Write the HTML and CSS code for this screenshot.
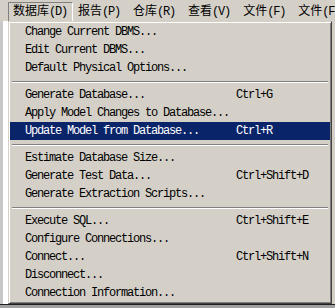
FILE: index.html
```html
<!DOCTYPE html>
<html>
<head>
  <title>Database Menu</title>
  <meta name="viewport" content="width=device-width, initial-scale=1">
  <link rel="stylesheet" href="styles.css">
</head>
<body>
  <div class="menubar">
    <span class="menu-title active">数据库<span class="key">(D)</span></span>
    <span class="menu-title">报告<span class="key">(P)</span></span>
    <span class="menu-title">仓库<span class="key">(R)</span></span>
    <span class="menu-title">查看<span class="key">(V)</span></span>
    <span class="menu-title">文件<span class="key">(F)</span></span>
    <span class="menu-title">文件<span class="key">(F)</span></span>
  </div>
  <div class="stage">
    <div class="backdrop"></div>
    <div class="dropdown">
      <div class="item"><span class="label">Change Current DBMS...</span></div>
      <div class="item"><span class="label">Edit Current DBMS...</span></div>
      <div class="item"><span class="label">Default Physical Options...</span></div>
      <div class="sep"></div>
      <div class="item"><span class="label">Generate Database...</span><span class="shortcut">Ctrl+G</span></div>
      <div class="item"><span class="label">Apply Model Changes to Database...</span></div>
      <div class="item selected"><span class="label">Update Model from Database...</span><span class="shortcut">Ctrl+R</span></div>
      <div class="sep"></div>
      <div class="item"><span class="label">Estimate Database Size...</span></div>
      <div class="item"><span class="label">Generate Test Data...</span><span class="shortcut">Ctrl+Shift+D</span></div>
      <div class="item"><span class="label">Generate Extraction Scripts...</span></div>
      <div class="sep"></div>
      <div class="item"><span class="label">Execute SQL...</span><span class="shortcut">Ctrl+Shift+E</span></div>
      <div class="item"><span class="label">Configure Connections...</span></div>
      <div class="item"><span class="label">Connect...</span><span class="shortcut">Ctrl+Shift+N</span></div>
      <div class="item"><span class="label">Disconnect...</span></div>
      <div class="item"><span class="label">Connection Information...</span></div>
    </div>
    <div class="rest"></div>
  </div>
  <div class="bottom"></div>
</body>
</html>
```

FILE: styles.css
```css
body {
  margin: 0;
  width: 335px;
  height: 308px;
  overflow: hidden;
  background-color: #d4d0c8;
  font-family: "Liberation Mono", "Noto Sans CJK SC", monospace;
  color: #000;
}
.menubar {
  display: flex;
  height: 21px;
  padding-left: 8px;
  background-color: #d4d0c8;
  font-size: 12px;
  line-height: 17px;
}
.menu-title {
  padding: 1px 5px 0 4px;
  margin-right: 2px;
  margin-top: 2px;
  height: 17px;
  white-space: nowrap;
  border: 1px solid transparent;
}
.menu-title.active {
  border-color: #808080 #fff #fff #808080;
  margin-right: 0;
}
.key {
  letter-spacing: -1.2px;
  font-size: 12px;
}
.stage {
  display: flex;
}
.backdrop {
  width: 5px;
  border-left: 3px solid #c8c8c8;
  background-color: #fff;
}
.dropdown {
  width: 320px;
  padding: 1px;
  border-style: solid;
  border-width: 1px;
  border-color: #d4d0c8 #404040 #404040 #d4d0c8;
  box-shadow: inset 1px 1px 0 #fff, inset -1px -1px 0 #808080;
  background-color: #d4d0c8;
  font-size: 12px;
}
.rest {
  width: 3px;
  background-color: #d4d0c8;
}
.item {
  display: flex;
  height: 18px;
  line-height: 18px;
  padding-left: 15px;
  letter-spacing: -1.2px;
  white-space: nowrap;
}
.item .label {
  width: 211px;
}
.item.selected {
  background-color: #0a246a;
  color: #fff;
}
.sep {
  height: 9px;
  margin: 0 2px;
  background: linear-gradient(#d4d0c8 4px, #808080 4px, #808080 5px, #fff 5px, #fff 6px, #d4d0c8 6px);
}
.bottom {
  height: 3px;
  border-top: 1px solid #202020;
  background-color: #a0a0a0;
}
```
